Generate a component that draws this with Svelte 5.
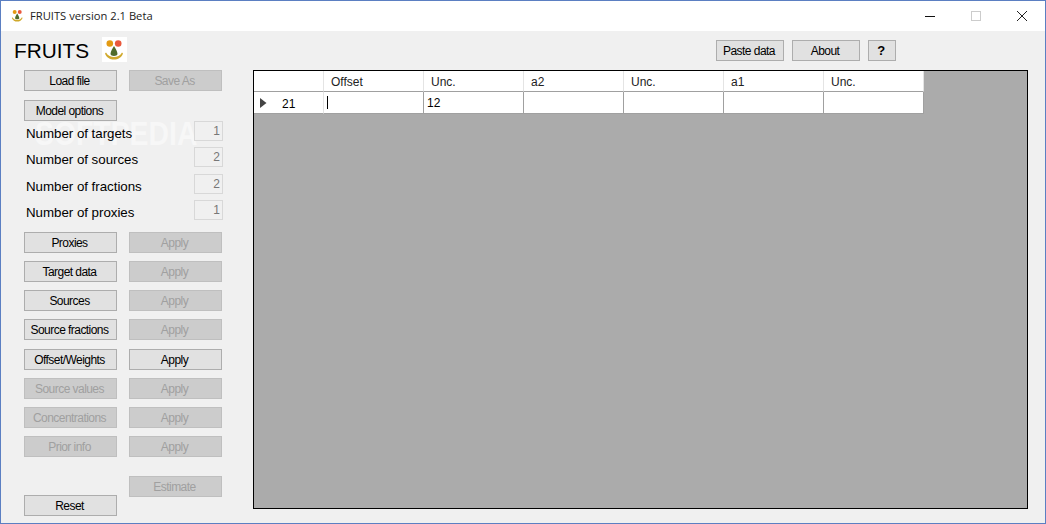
<script>
  const headers = ['Offset', 'Unc.', 'a2', 'Unc.', 'a1', 'Unc.'];
  const cells = ['', '12', '', '', '', ''];
  const counts = [
    { label: 'Number of targets', value: 1, cls: 'c1' },
    { label: 'Number of sources', value: 2, cls: 'c2' },
    { label: 'Number of fractions', value: 2, cls: 'c3' },
    { label: 'Number of proxies', value: 1, cls: 'c4' }
  ];
  const steps = [
    { name: 'Proxies', on: true, apply: false },
    { name: 'Target data', on: true, apply: false },
    { name: 'Sources', on: true, apply: false },
    { name: 'Source fractions', on: true, apply: false },
    { name: 'Offset/Weights', on: true, apply: true, gap: true },
    { name: 'Source values', on: false, apply: false },
    { name: 'Concentrations', on: false, apply: false },
    { name: 'Prior info', on: false, apply: false }
  ];
</script>

{#snippet logo(size)}
  <svg width={size} height={size} viewBox="0 0 25 25" aria-hidden="true">
    <circle cx="7.8" cy="6.5" r="3.3" fill="#e39a12" />
    <circle cx="16.2" cy="6.5" r="3.3" fill="#e9583c" />
    <path d="M12 9 C13.2 11 15.5 14.5 15.5 17 C15.5 19.5 8.5 19.5 8.5 17 C8.5 14.5 10.8 11 12 9 Z" fill="#4f6b2a" />
    <path d="M4 15.5 C6 19 9 20 12 20 C15 20 18 19 20 15.5 L21 16.5 C19.5 20.5 16 22.5 12 22.5 C8 22.5 4.5 20.5 3 16.5 Z" fill="#d0a92c" />
  </svg>
{/snippet}

<div class="win">
  <span class="wm">SOFTPEDIA</span>
  <div class="titlebar">
    <span class="ticon">{@render logo(15)}</span>
    <span class="ttext">FRUITS version 2.1 Beta</span>
    <div class="controls">
      <span class="ctl"><svg width="12" height="12" viewBox="0 0 12 12"><path d="M1 6.5H11" stroke="#111" fill="none" /></svg></span>
      <span class="ctl"><svg width="12" height="12" viewBox="0 0 12 12"><rect x="1.5" y="1.5" width="9" height="9" stroke="#ccc" fill="none" /></svg></span>
      <span class="ctl"><svg width="12" height="12" viewBox="0 0 12 12"><path d="M1 1L11 11M11 1L1 11" stroke="#222" fill="none" /></svg></span>
    </div>
  </div>

  <div class="client">
    <header class="top">
      <h1>FRUITS</h1>
      <span class="logo">{@render logo(25)}</span>
      <div class="topbtns">
        <button class="btn paste">Paste data</button>
        <button class="btn about">About</button>
        <button class="btn help">?</button>
      </div>
    </header>

    <div class="content">
      <aside class="side">
        <div class="row">
          <button class="btn">Load file</button>
          <button class="btn off">Save As</button>
        </div>
        <div class="row model"><button class="btn">Model options</button></div>

        <div class="counts">
          {#each counts as c}
            <div class="count {c.cls}">
              <span class="lbl">{c.label}</span>
              <span class="num">{c.value}</span>
            </div>
          {/each}
        </div>

        <div class="steps">
          {#each steps as s}
            <div class="row" class:gap={s.gap}>
              <button class="btn" class:off={!s.on}>{s.name}</button>
              <button class="btn" class:off={!s.apply}>Apply</button>
            </div>
          {/each}
        </div>

        <div class="estimate"><button class="btn off">Estimate</button></div>
        <div class="reset"><button class="btn">Reset</button></div>
      </aside>

      <main class="grid">
        <div class="tbl">
          <div class="thead">
            <div class="corner"></div>
            {#each headers as h}<div class="th">{h}</div>{/each}
          </div>
          <div class="tbody">
            <div class="rowhead">
              <svg width="7" height="10" viewBox="0 0 7 10"><path d="M0 0L6.5 5L0 10Z" fill="#444" /></svg>
              <span>21</span>
            </div>
            {#each cells as c, i}
              <div class="td">{#if i === 0}<span class="caret"></span>{/if}{c}</div>
            {/each}
          </div>
        </div>
      </main>
    </div>
  </div>
</div>

<style>
  :global(body) { margin: 0; }
  .win {
    position: relative;
    box-sizing: border-box;
    width: 1046px;
    height: 524px;
    border: 1px solid #5b7fc2;
    background: #f0f0f0;
    display: flex;
    flex-direction: column;
    font-family: "Liberation Sans", Arial, sans-serif;
    color: #000;
    overflow: hidden;
  }
  .titlebar {
    height: 30px;
    flex: none;
    background: #fff;
    display: flex;
    align-items: center;
    padding-left: 9px;
  }
  .ticon { width: 15px; height: 15px; display: block; margin-top: -2px; }
  .ttext {
    margin-left: 5px;
    font-family: "Open Sans", sans-serif;
    font-size: 11.2px;
    color: #222;
    margin-top: -1px;
  }
  .controls { margin-left: auto; display: flex; }
  .ctl {
    width: 46px;
    height: 30px;
    display: flex;
    align-items: center;
    justify-content: center;
  }
  .client { position: relative; flex: 1; display: flex; flex-direction: column; min-height: 0; }
  .top {
    height: 39px;
    flex: none;
    display: flex;
    align-items: flex-start;
    padding-left: 13px;
    box-sizing: border-box;
  }
  h1 {
    margin: 8px 0 0;
    font-size: 20.8px;
    font-weight: 400;
    line-height: 24px;
    width: 88px;
  }
  .logo { width: 25px; height: 25px; margin-top: 6px; background: #fff; display: block; }
  .topbtns { margin-left: auto; display: flex; gap: 8px; margin-top: 9px; margin-right: 149px; }
  .btn {
    box-sizing: border-box;
    width: 93px;
    height: 21px;
    padding: 0 2px 0 0;
    border: 1px solid #adadad;
    background: #e1e1e1;
    color: #000;
    font-family: "Liberation Sans", Arial, sans-serif;
    font-size: 12px;
    letter-spacing: -0.55px;
    border-radius: 0;
    flex: none;
  }
  .btn.off { background: #cccccc; border-color: #bfbfbf; color: #a0a0a0; }
  .paste { width: 68px; }
  .about { width: 68px; }
  .help { width: 28px; font-weight: 700; font-size: 13px; }
  .content { flex: 1; display: flex; min-height: 0; }
  .side { width: 252px; flex: none; padding-left: 23px; box-sizing: border-box; }
  .row { display: flex; gap: 12px; }
  .model { margin-top: 9px; }
  .count {
    display: flex;
    align-items: flex-start;
    justify-content: space-between;
    width: 199px;
    padding-left: 2px;
    box-sizing: border-box;
  }
  .lbl { font-size: 13.33px; line-height: 16px; padding-top: 5px; letter-spacing: -0.03px; }
  .num {
    box-sizing: border-box;
    width: 29px;
    height: 20px;
    border: 1px solid #d8d8d8;
    background: #f0f0f0;
    text-align: right;
    padding-right: 2px;
    font-size: 12px;
    line-height: 18px;
    color: #777;
  }
  .c1 { height: 26px; }
  .c2 { height: 27px; }
  .c3 { height: 26px; }
  .c4 { height: 21px; }
  .steps { margin-top: 11px; display: flex; flex-direction: column; gap: 8px; }
  .gap { margin-top: 1px; }
  .estimate { margin: 19px 0 0 105px; }
  .reset { margin-top: -2px; }
  .grid {
    box-sizing: border-box;
    width: 775px;
    height: 439px;
    border: 1px solid #000;
    background: #ababab;
  }
  .tbl { width: 670px; font-size: 12px; }
  .thead, .tbody { display: flex; background: #fff; }
  .thead { height: 21px; }
  .corner { width: 70px; border-bottom: 1px solid #a0a0a0; box-sizing: border-box; border-right: 1px solid #e4e4e4; }
  .th {
    width: 100px;
    box-sizing: border-box;
    border-right: 1px solid #e4e4e4;
    border-bottom: 1px solid #a0a0a0;
    padding-left: 7px;
    line-height: 22px;
    color: #222;
  }
  .tbody { height: 22px; }
  .rowhead {
    width: 70px;
    box-sizing: border-box;
    border-right: 1px solid #e4e4e4;
    border-bottom: 1px solid #a0a0a0;
    display: flex;
    align-items: center;
    padding-left: 6px;
  }
  .rowhead span { margin-left: 15px; margin-top: 2px; }
  .td {
    width: 100px;
    box-sizing: border-box;
    border-right: 1px solid #a0a0a0;
    border-bottom: 1px solid #a0a0a0;
    padding-left: 3px;
    line-height: 22px;
  }
  .caret { display: inline-block; width: 1px; height: 13px; background: #000; vertical-align: -2px; }
  .wm {
    position: absolute;
    left: 34px;
    top: 114px;
    font-size: 33px;
    line-height: 38px;
    font-weight: 700;
    color: #f7f7f7;
    transform: scaleX(0.86);
    transform-origin: left;
    pointer-events: none;
  }
</style>
